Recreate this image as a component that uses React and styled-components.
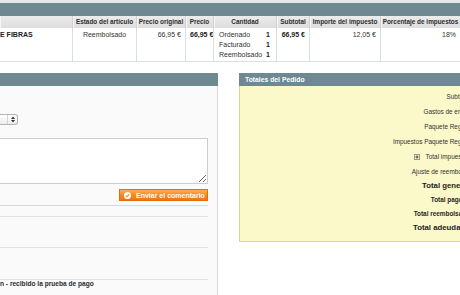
import React from 'react';
import styled, { createGlobalStyle } from 'styled-components';

const Global = createGlobalStyle`
  html, body { margin: 0; padding: 0; background: #fff; }
  body { font-family: "Liberation Sans", Arial, Helvetica, sans-serif; color: #2f2f2f; }
  * { box-sizing: border-box; }
`;

const Viewport = styled.div`
  width: 460px;
  height: 295px;
  overflow: hidden;
  background: #fff;
`;

const SectionHead = styled.div`
  height: 16px;
  border-top: 3px solid #e3e7e8;
  background: #6f8992;
`;

const Grid = styled.div`
  display: grid;
  grid-template-columns: 73px 64px 49px 28px 63px 33px 71px 80px 40px;
  width: 501px;
`;

const HeadCell = styled.div`
  height: 12px;
  line-height: 12px;
  font-size: 6.4px;
  font-weight: bold;
  color: #2d2d2d;
  text-align: center;
  white-space: nowrap;
  overflow: hidden;
  padding: 0 1px;
  background: linear-gradient(to bottom, #ececec 0%, #e4e4e4 50%, #dedede 100%);
  border-right: 1px solid #d1cfcf;
  box-shadow: inset 1px 0 0 #f6f6f6;
`;

const Cell = styled.div`
  height: 34px;
  padding: 2px 4px 1px;
  line-height: 10px;
  font-size: 7px;
  font-weight: ${p => (p.$bold ? 'bold' : 'normal')};
  color: ${p => (p.$bold ? '#222' : '#333')};
  text-align: ${p => p.$align || 'left'};
  white-space: nowrap;
  overflow: hidden;
  border-right: 1px solid #dadfe0;
  border-bottom: 1px solid #dadfe0;
  padding-left: ${p => (p.$flush ? '0' : '4px')};
`;

const QtyCell = styled(Cell)`
  display: grid;
  grid-template-columns: 1fr auto;
  grid-auto-rows: 10px;
  padding: 2px 6px 1px 5px;
`;

const QtyNum = styled.span`
  font-weight: bold;
  color: #222;
`;

const Columns = styled.div`
  display: flex;
  gap: 21px;
  margin-top: 11px;
  align-items: flex-start;
`;

const LeftCol = styled.div`
  width: 218px;
  flex: none;
`;

const RightCol = styled.div`
  width: 250px;
  flex: none;
`;

const PanelHead = styled.div`
  height: 13px;
  line-height: 13px;
  background: #6f8992;
  color: #fff;
  font-size: 6.8px;
  font-weight: bold;
  padding-left: 6px;
  white-space: nowrap;
`;

const Fieldset = styled.div`
  background: #fafafa;
  border-right: 1px solid #d9d9d9;
  height: 220px;
  padding: 28px 9px 0 0;
`;

const SelectBox = styled.div`
  width: 18px;
  height: 11px;
  border: 1px solid #b5b5b5;
  border-left: none;
  border-radius: 0 3px 3px 0;
  background: linear-gradient(to bottom, #ffffff, #ececec);
  display: flex;
  justify-content: flex-end;
`;

const SelectArrows = styled.div`
  width: 10px;
  border-left: 1px solid #d4d4d4;
  display: flex;
  align-items: center;
  justify-content: center;
`;

const CommentArea = styled.textarea`
  display: block;
  width: 208px;
  height: 46px;
  margin: 13px 0 0;
  padding: 2px;
  border: 1px solid #cdcdcd;
  border-left: none;
  background: #fff;
  font-family: inherit;
  font-size: 7px;
  outline: none;
`;

const ButtonRow = styled.div`
  display: flex;
  justify-content: flex-end;
  margin-top: 5px;
  padding-bottom: 4px;
  border-bottom: 1px solid #d9d9d9;
`;

const OrangeButton = styled.button`
  display: flex;
  align-items: center;
  gap: 5px;
  height: 12px;
  width: 89px;
  padding: 0 0 0 4px;
  margin: 0;
  border: 1px solid #e76b0d;
  background: linear-gradient(to bottom, #fbb05a 0%, #f48c24 45%, #ec7612 100%);
  color: #fff;
  font-family: inherit;
  font-size: 7px;
  font-weight: bold;
  white-space: nowrap;
  cursor: pointer;
`;

const NoteList = styled.ul`
  list-style: none;
  margin: 10px 0 0;
  padding: 0;
`;

const NoteItem = styled.li`
  border-top: 1px solid #e1e1e1;
  height: ${p => p.$h}px;
  padding-top: 0;
  font-size: 6.6px;
  font-weight: bold;
  color: #2a2a2a;
  white-space: nowrap;
  line-height: 8px;
`;

const TotalsBox = styled.div`
  background: #fbf8c9;
  border: 1px solid #d9d3a0;
  border-top: none;
  padding: 3px 0 6px;
`;

const TotalsTable = styled.div`
  display: grid;
  grid-template-columns: 230px 60px;
`;

const TotalLabel = styled.div`
  height: ${p => p.$h}px;
  line-height: ${p => p.$h}px;
  text-align: right;
  white-space: nowrap;
  font-size: ${p => (p.$big ? '7.8px' : '6.4px')};
  font-weight: ${p => (p.$bold ? 'bold' : 'normal')};
  color: ${p => (p.$bold ? '#1f1f1f' : '#333')};
  display: flex;
  justify-content: flex-end;
  align-items: center;
  gap: 6px;
`;

const TotalValue = styled(TotalLabel)`
  padding-left: 8px;
`;

const ExpandIcon = () => (
  <svg width="6" height="6" viewBox="0 0 6 6">
    <rect x="0.5" y="0.5" width="5" height="5" fill="#f4f0c0" stroke="#9a9a8a" strokeWidth="1" />
    <path d="M1.5 3h3M3 1.5v3" stroke="#444" strokeWidth="1" />
  </svg>
);

const CheckIcon = () => (
  <svg width="7" height="7" viewBox="0 0 7 7">
    <circle cx="3.5" cy="3.5" r="3.5" fill="#fff" />
    <path d="M1.9 3.6l1.1 1.1 2.1-2.3" fill="none" stroke="#f08a24" strokeWidth="1.1" />
  </svg>
);

const UpDown = () => (
  <svg width="4" height="7" viewBox="0 0 4 7">
    <path d="M0 3L2 0.5 4 3z" fill="#333" />
    <path d="M0 4l2 2.5L4 4z" fill="#333" />
  </svg>
);

const headings = [
  '',
  'Estado del artículo',
  'Precio original',
  'Precio',
  'Cantidad',
  'Subtotal',
  'Importe del impuesto',
  'Porcentaje de impuestos',
  'Importe del descuento',
];

const totalsBody = [
  ['Subtotal', '66,95 €'],
  ['Gastos de envío', '0,00 €'],
  ['Paquete Regalo', '0,00 €'],
  ['Impuestos Paquete Regalo', '0,00 €'],
  ['Total impuestos', '12,05 €', true],
  ['Ajuste de reembolso', '0,00 €'],
];

const totalsFoot = [
  ['Total general', '79,00 €', true],
  ['Total pagado', '79,00 €', false],
  ['Total reembolsado', '79,00 €', false],
  ['Total adeudado', '0,00 €', true],
];

export default function App() {
  return (
    <Viewport>
      <Global />
      <SectionHead />
      <Grid>
        {headings.map((h, i) => (
          <HeadCell key={i}>{h}</HeadCell>
        ))}
        <Cell $bold $flush>E FIBRAS</Cell>
        <Cell $align="center">Reembolsado</Cell>
        <Cell $align="right">66,95 €</Cell>
        <Cell $align="right" $bold>66,95 €</Cell>
        <QtyCell>
          <span>Ordenado</span><QtyNum>1</QtyNum>
          <span>Facturado</span><QtyNum>1</QtyNum>
          <span>Reembolsado</span><QtyNum>1</QtyNum>
        </QtyCell>
        <Cell $align="right" $bold>66,95 €</Cell>
        <Cell $align="right">12,05 €</Cell>
        <Cell $align="right">18%</Cell>
        <Cell $align="right">0,00 €</Cell>
      </Grid>

      <Columns>
        <LeftCol>
          <PanelHead />
          <Fieldset>
            <SelectBox>
              <SelectArrows><UpDown /></SelectArrows>
            </SelectBox>
            <CommentArea defaultValue="" />
            <ButtonRow>
              <OrangeButton type="button">
                <CheckIcon />
                <span>Enviar el comentario</span>
              </OrangeButton>
            </ButtonRow>
            <NoteList>
              <NoteItem $h={31} />
              <NoteItem $h={32} />
              <NoteItem $h={20}>n - recibido la prueba de pago</NoteItem>
            </NoteList>
          </Fieldset>
        </LeftCol>
        <RightCol>
          <PanelHead>Totales del Pedido</PanelHead>
          <TotalsBox>
            <TotalsTable>
              {totalsBody.map(([label, value, icon]) => (
                <React.Fragment key={label}>
                  <TotalLabel $h={15}>
                    {icon && <ExpandIcon />}
                    <span>{label}</span>
                  </TotalLabel>
                  <TotalValue $h={15}>{value}</TotalValue>
                </React.Fragment>
              ))}
              {totalsFoot.map(([label, value, big]) => (
                <React.Fragment key={label}>
                  <TotalLabel $h={14} $bold $big={big}>{label}</TotalLabel>
                  <TotalValue $h={14} $bold $big={big}>{value}</TotalValue>
                </React.Fragment>
              ))}
            </TotalsTable>
          </TotalsBox>
        </RightCol>
      </Columns>
    </Viewport>
  );
}
